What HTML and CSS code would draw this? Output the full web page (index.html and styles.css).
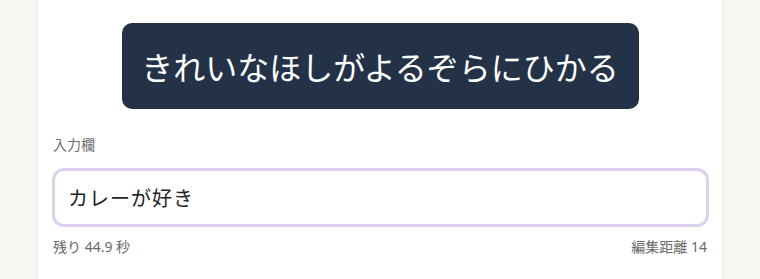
FILE: index.html
```html
<!DOCTYPE html>
<html lang="ja">
<head>
<meta charset="utf-8">
<title>タイピング</title>
<link rel="stylesheet" href="styles.css">
</head>
<body>
  <main class="card">
    <div class="prompt-wrap">
      <div class="prompt">きれいなほしがよるぞらにひかる</div>
    </div>
    <label class="field-label" for="answer">入力欄</label>
    <div class="input-box" id="answer">カレーが好き</div>
    <div class="meta">
      <span>残り 44.9 秒</span>
      <span>編集距離 14</span>
    </div>
  </main>
</body>
</html>
```

FILE: styles.css
```css
html, body {
  margin: 0;
  padding: 0;
}
body {
  background: #f8f6f1;
  font-family: "Noto Sans", "Noto Sans CJK JP", sans-serif;
  height: 279px;
  overflow: hidden;
}
.card {
  width: 686px;
  box-sizing: border-box;
  margin: 0 auto;
  background: #ffffff;
  border-left: 1px solid #efece6;
  border-right: 1px solid #efece6;
  padding: 23px 13px 22px 14px;
}
.prompt-wrap {
  display: flex;
  justify-content: center;
}
.prompt {
  background: #243248;
  color: #ffffff;
  font-size: 32px;
  line-height: 48px;
  padding: 19px 20px 19px 19px;
  border-radius: 10px;
  font-family: "Noto Sans CJK JP", sans-serif;
}
.field-label {
  display: block;
  margin-top: 26px;
  font-size: 14px;
  line-height: 20px;
  color: #707070;
  padding-left: 1px;
}
.input-box {
  margin-top: 13px;
  border: 3px solid #dcd0ec;
  border-radius: 12px;
  padding: 12px 13px;
  font-size: 20px;
  line-height: 29px;
  color: #222222;
  letter-spacing: 1px;
  font-family: "Noto Sans CJK JP", sans-serif;
}
.meta {
  margin-top: 10px;
  display: flex;
  justify-content: space-between;
  font-size: 14px;
  line-height: 20px;
  color: #6a6a6a;
  padding: 0 2px 0 1px;
}
```
